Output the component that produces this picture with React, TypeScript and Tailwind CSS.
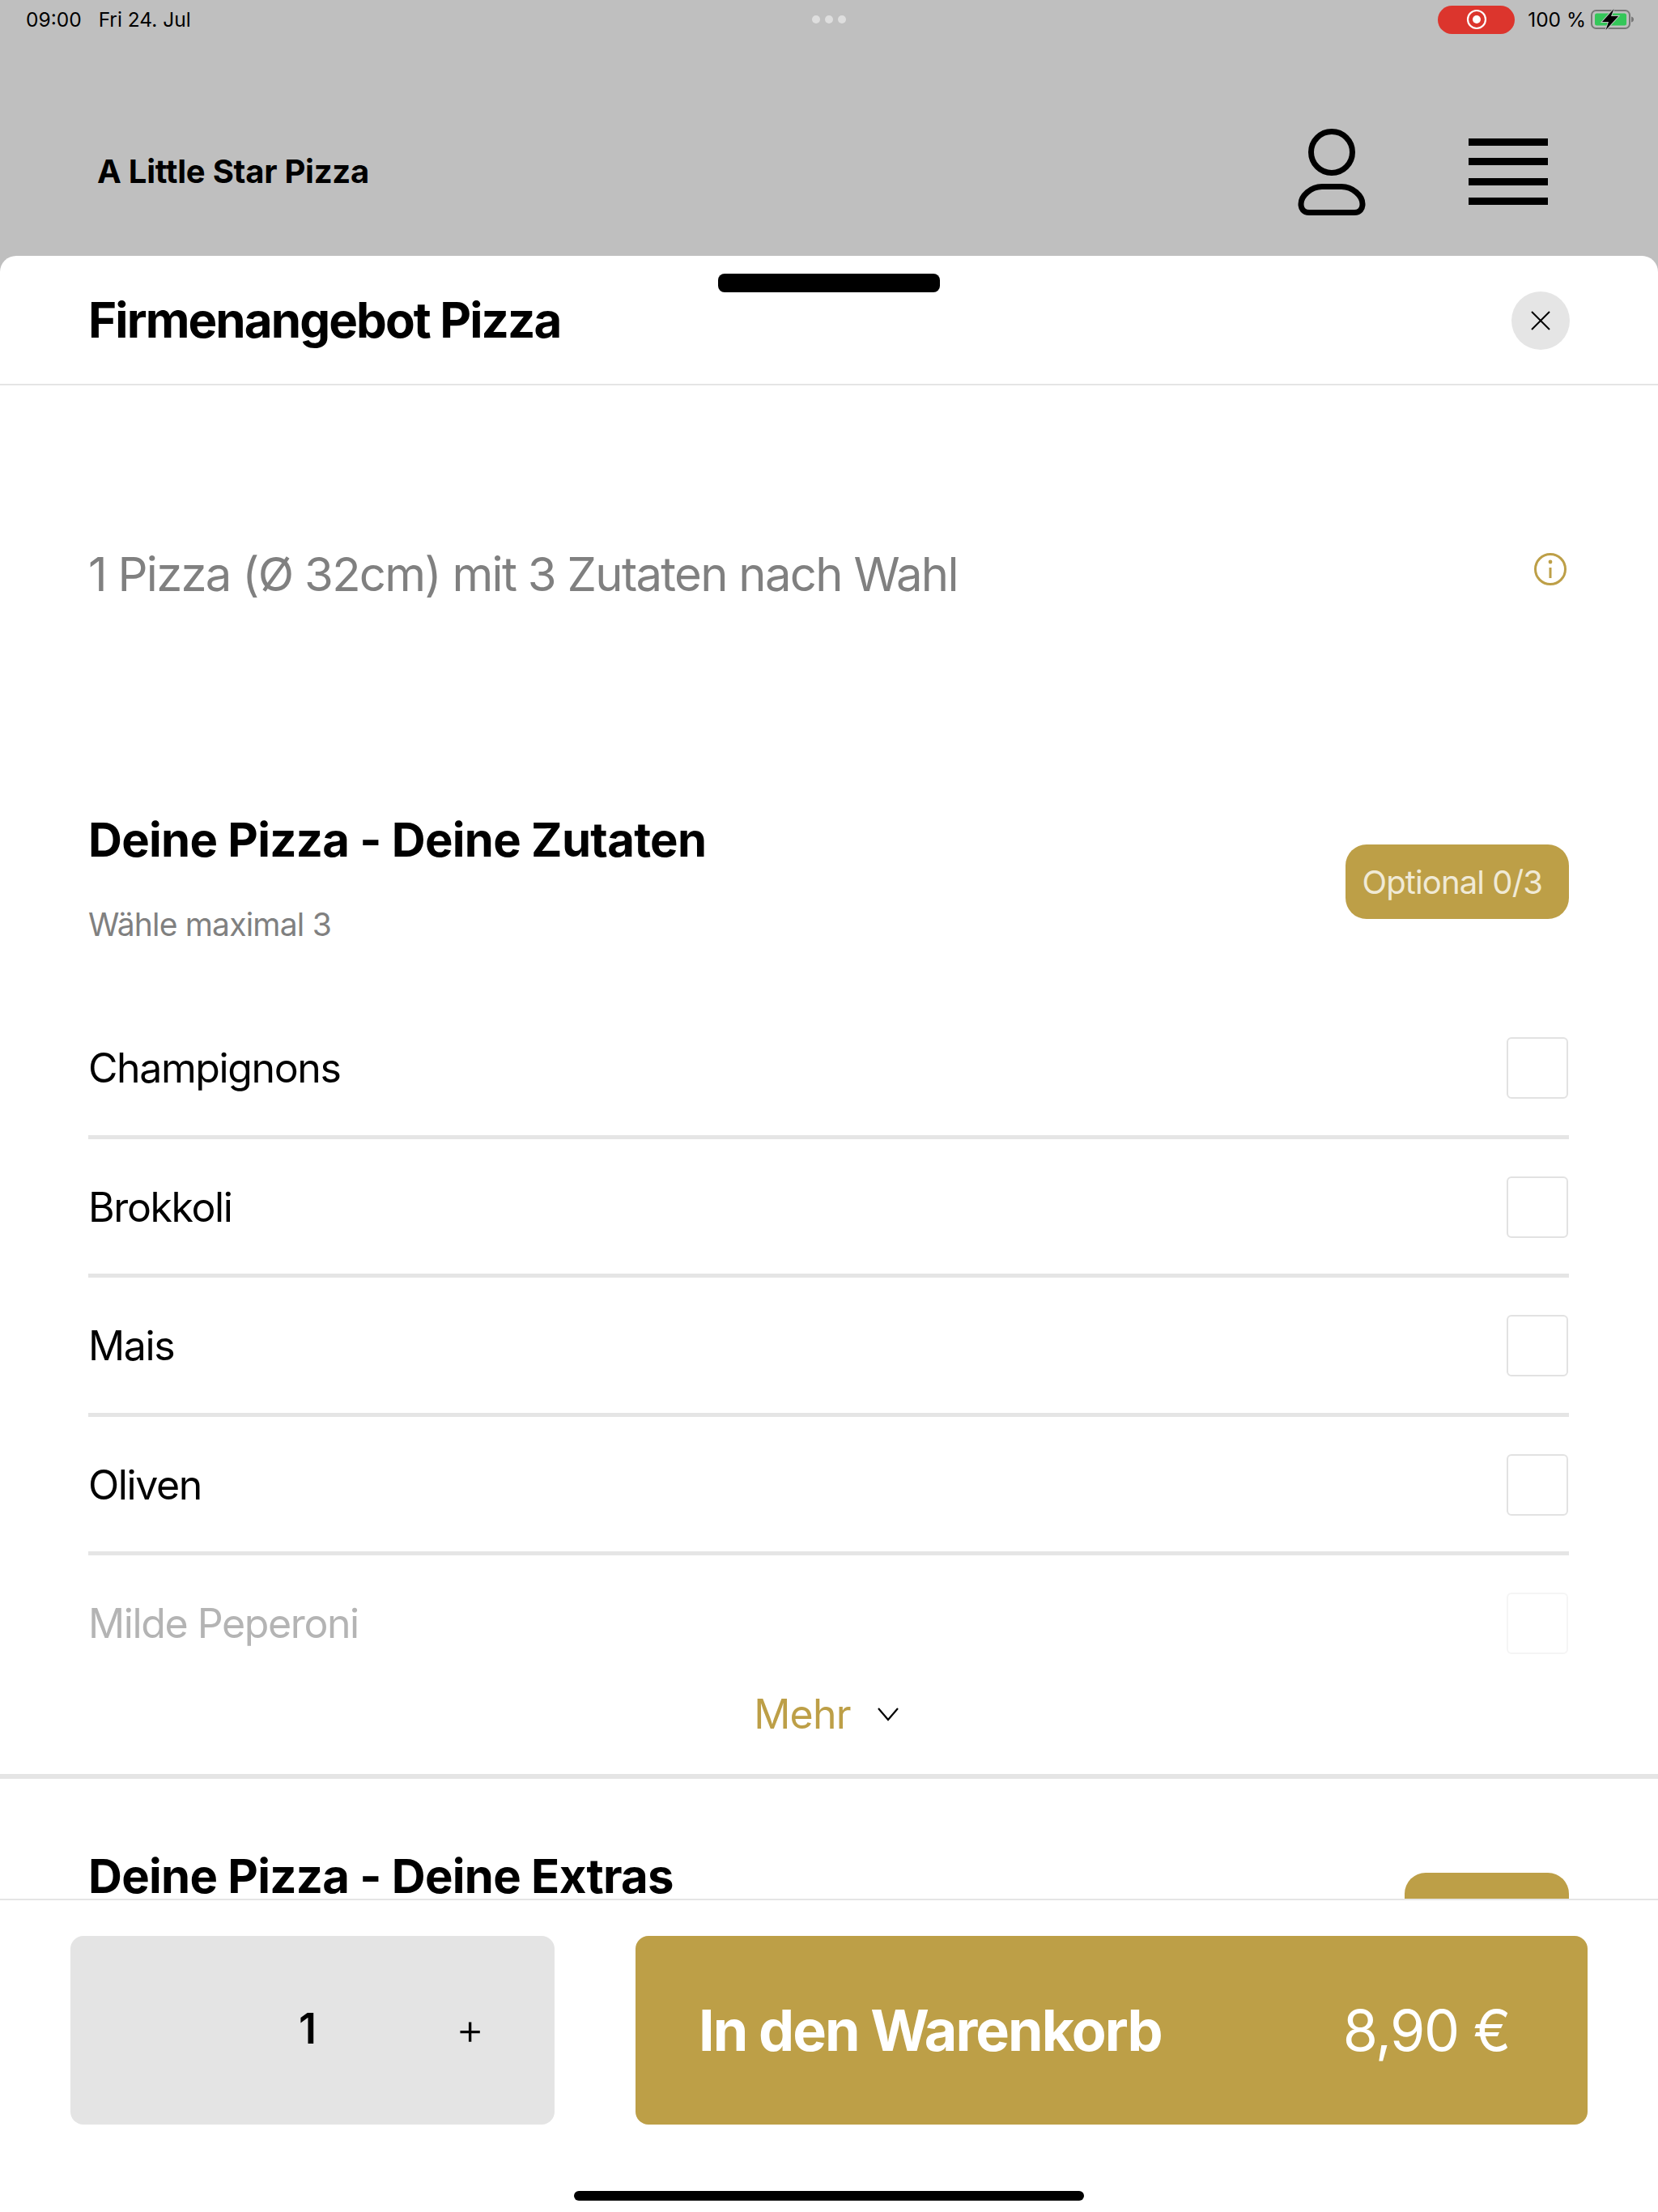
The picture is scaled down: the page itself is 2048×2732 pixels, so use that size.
import React from "react";

const font = { fontFamily: "Inter, 'Noto Sans', sans-serif" };

function Row({ label, faded }: { label: string; faded?: boolean }) {
  return (
    <div className={`h-[171.5px] pt-[2px] flex items-center justify-between border-b-[5px] ${faded ? "border-transparent" : "border-[#e5e5e5]"}`}>
      <span className={`text-[50px] leading-[60px] tracking-[-1.4px] ${faded ? "text-[#b4b4b4]" : "text-black"}`}>{label}</span>
      <span className={`w-[76px] h-[76px] rounded-[6px] border-2 mr-[1px] ${faded ? "border-[#f5f5f5]" : "border-[#e2e2e2]"}`} />
    </div>
  );
}

export default function App() {
  return (
    <div style={font} className="w-[2048px] h-[2732px] bg-[#bfbfbf] flex flex-col overflow-hidden relative">
      <div className="h-[48px] flex items-center justify-between pl-[32px] pr-[29px] text-[24.5px] text-black shrink-0 relative">
        <div className="flex gap-[21px]">
          <span>09:00</span>
          <span>Fri 24. Jul</span>
        </div>
        <div className="absolute left-[1003px] top-[19px] flex gap-[6px]">
          <span className="w-[10px] h-[10px] rounded-full bg-[#dedede]" />
          <span className="w-[10px] h-[10px] rounded-full bg-[#dedede]" />
          <span className="w-[10px] h-[10px] rounded-full bg-[#dedede]" />
        </div>
        <div className="flex items-center">
          <div className="w-[95px] h-[35px] rounded-[18px] bg-[#dc352d] flex items-center justify-center mr-[16px]">
            <svg width="26" height="26" viewBox="0 0 26 26">
              <circle cx="13" cy="13" r="11" fill="none" stroke="#fff" strokeWidth="2.2" />
              <circle cx="13" cy="13" r="5" fill="#fff" />
            </svg>
          </div>
          <span className="mr-[6px]">100 %</span>
          <svg width="54" height="28" viewBox="0 0 54 28">
            <rect x="1" y="3" width="47" height="22" rx="5.5" fill="none" stroke="#777" strokeWidth="2" />
            <rect x="5" y="6.5" width="39" height="15" rx="2.5" fill="#34c759" />
            <path d="M50 10.5c2 .6 3 1.8 3 3.500s-1 2.900-3 3.500z" fill="#777" />
            <path d="M28.500 1 14 17h8L18.500 27 34 10h-9z" fill="#000" stroke="#bfbfbf" strokeWidth="2" paintOrder="stroke" />
          </svg>
        </div>
      </div>

      <div className="h-[268px] shrink-0 flex items-center justify-between pl-[120px] pr-[136px] pt-[60px]">
        <span className="text-[40px] font-bold text-black tracking-[-0.25px]">A Little Star Pizza</span>
        <div className="flex items-center gap-[127px]">
          <svg width="84" height="107" viewBox="0 0 84 107" fill="none" stroke="#000" strokeWidth="7">
            <circle cx="42" cy="29" r="25.500" />
            <path d="M30 71.500h24C68 71.500 80 83 80 93c0 6-3 10.500-10 10.500H14C7 103.500 4 99 4 93c0-10 12-21.500 26-21.500z" strokeLinejoin="round" />
          </svg>
          <div className="w-[98px] flex flex-col gap-[15.300px]">
            <span className="h-[9px] bg-black" />
            <span className="h-[9px] bg-black" />
            <span className="h-[9px] bg-black" />
            <span className="h-[9px] bg-black" />
          </div>
        </div>
      </div>

      <div className="flex-1 min-h-0 bg-white rounded-t-[20px] flex flex-col relative">
        <div className="absolute left-[887px] top-[22px] w-[274px] h-[23px] rounded-[8px] bg-black" />
        <div className="h-[160px] shrink-0 border-b-2 border-[#e5e5e5] flex items-center justify-between pl-[109px] pr-[110px]">
          <span className="text-[60px] leading-[72px] font-bold text-black tracking-[-1.9px]">Firmenangebot Pizza</span>
          <div className="w-[72px] h-[72px] rounded-full bg-[#e5e5e5] flex items-center justify-center mt-[2px] mr-[-1px]">
            <svg width="26" height="26" viewBox="0 0 26 26" fill="none" stroke="#000" strokeWidth="2">
              <path d="M2 2l22 22M24 2 2 24" />
            </svg>
          </div>
        </div>

        <div className="flex-1 min-h-0 overflow-hidden flex flex-col">
          <div className="h-[458px] shrink-0 flex items-center justify-between pl-[109px] pr-[110px]">
            <span className="text-[58px] leading-[70px] text-[#808080] tracking-[-1.7px] mt-[8px]">1 Pizza (Ø 32cm) mit 3 Zutaten nach Wahl</span>
            <svg width="42" height="42" viewBox="0 0 42 42" fill="none" stroke="#bd9f47" className="mr-[2px] mb-[5px]">
              <circle cx="21" cy="21" r="18.500" strokeWidth="3" />
              <path d="M21 19v13" strokeWidth="3" />
              <circle cx="21" cy="12" r="2.400" fill="#bd9f47" stroke="none" />
            </svg>
          </div>

          <div className="pl-[109px] pr-[110px] pt-[68px] shrink-0">
            <div className="flex justify-between items-start">
              <div>
                <div className="text-[58px] leading-[70px] font-bold text-black tracking-[-0.7px]">Deine Pizza - Deine Zutaten</div>
                <div className="text-[39px] leading-[50px] text-[#808080] mt-[45px] tracking-[-0.8px]">Wähle maximal 3</div>
              </div>
              <div className="mt-[41px] h-[92px] pl-[21px] pr-[33px] pt-[2px] rounded-[26px] bg-[#bd9f47] text-[#f0ead6] text-[40px] tracking-[-0.9px] flex items-center">Optional 0/3</div>
            </div>
            <div className="mt-[68px]">
              <Row label="Champignons" />
              <Row label="Brokkoli" />
              <Row label="Mais" />
              <Row label="Oliven" />
              <Row label="Milde Peperoni" faded />
            </div>
          </div>
          <div className="shrink-0 flex items-center justify-center gap-[32px] h-[156px] pt-[2px] border-b-[6px] border-[#e5e5e5] mt-[-52px] pr-[6px] relative">
            <span className="text-[50px] leading-[60px] text-[#bd9f47] tracking-[-0.8px]">Mehr</span>
            <svg width="28" height="20" viewBox="0 0 28 20" fill="none" stroke="#000" strokeWidth="2.2">
              <path d="M2 3l12 14L26 3" />
            </svg>
          </div>
          <div className="shrink-0 pl-[109px] pr-[110px] flex justify-between items-start pt-[85px]">
            <span className="text-[58px] leading-[70px] font-bold text-black tracking-[-0.7px]">Deine Pizza - Deine Extras</span>
            <div className="w-[203px] h-[92px] rounded-[26px] bg-[#bd9f47] mt-[31px] shrink-0" />
          </div>
        </div>

        <div className="shrink-0 h-[387px] border-t-2 border-[#e5e5e5] bg-white flex flex-col">
          <div className="flex gap-[100px] pl-[87px] pr-[87px] pt-[44px]">
            <div className="w-[598px] h-[233px] rounded-[16px] bg-[#e4e4e4] flex items-center text-black">
              <span className="ml-[273px] w-[40px] text-center text-[52px] font-semibold mt-[-4px]">1</span>
              <span className="ml-[163px] text-[54px] font-light mt-[-4px]">+</span>
            </div>
            <div className="flex-1 h-[233px] rounded-[16px] bg-[#bd9f47] text-white flex items-center justify-between pl-[78px] pr-[96px]">
              <span className="text-[70px] font-bold tracking-[-1.95px]">In den Warenkorb</span>
              <span className="text-[70px] tracking-[-1.5px]">8,90 €</span>
            </div>
          </div>
          <div className="mt-[82px] mx-auto w-[630px] h-[12px] rounded-full bg-black" />
        </div>
      </div>
    </div>
  );
}
